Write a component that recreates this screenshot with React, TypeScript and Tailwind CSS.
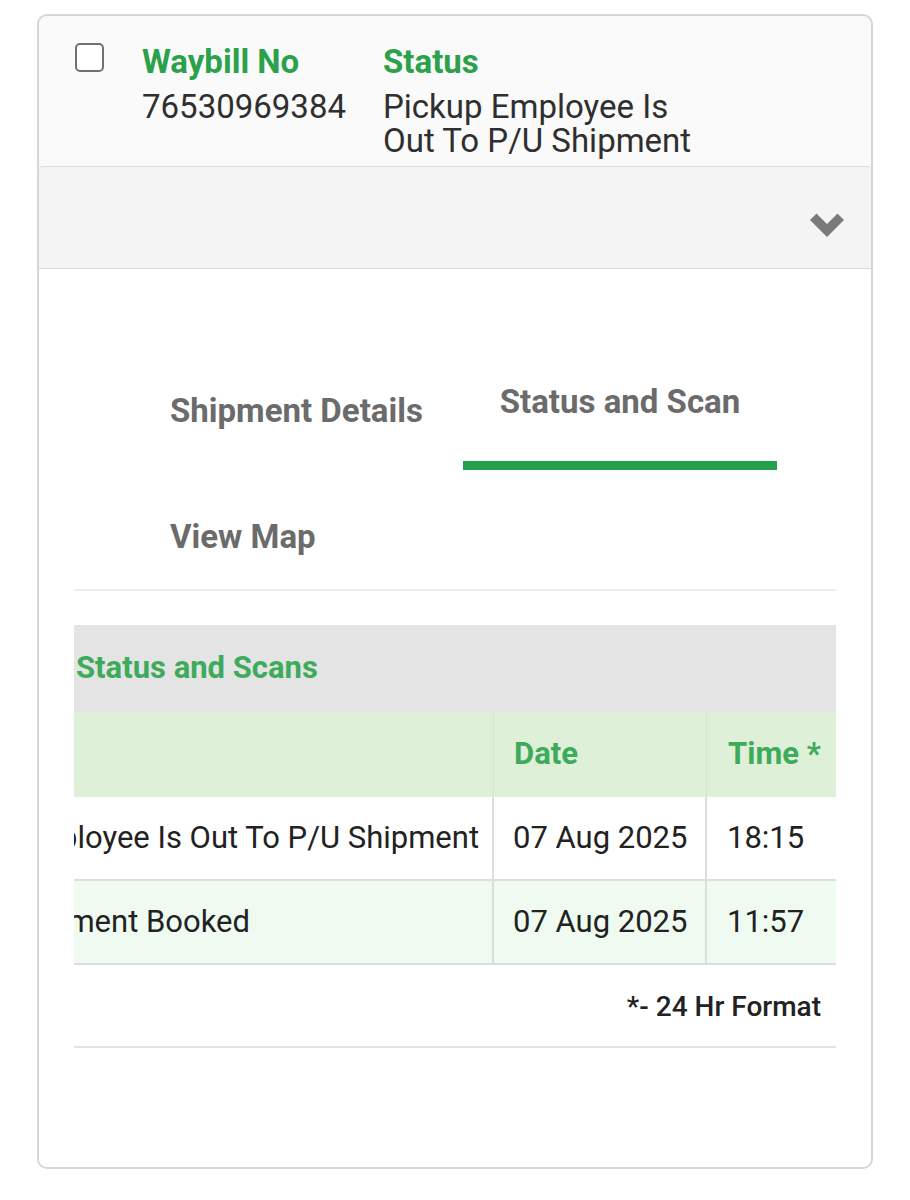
import React from 'react';

const rows = [
  { status: 'Pickup Employee Is Out To P/U Shipment', date: '07 Aug 2025', time: '18:15', indent: 'pl-[20px]', bg: 'bg-white' },
  { status: 'Shipment Booked', date: '07 Aug 2025', time: '11:57', indent: 'pl-[113px]', bg: 'bg-[#effbf1]' },
];

const Chevron = () => (
  <svg width="34" height="24" viewBox="0 0 34 24" aria-hidden="true">
    <polygon points="0,7 6.5,0.5 17,11 27.5,0.5 34,7 17,24" fill="#7a7a7a" />
  </svg>
);

const App: React.FC = () => {
  return (
    <div className="min-h-screen bg-white pt-[14px] px-[37px] font-['Roboto','Liberation_Sans',sans-serif]">
      <div className="border-2 border-[#d6d6d6] rounded-[10px] bg-[#fafafa] overflow-hidden">
        {/* waybill header */}
        <div className="flex pt-[27px] pb-[8px] pl-[36px]">
          <div className="w-[29px] h-[29px] border-2 border-[#707070] rounded-[5px] bg-white shrink-0" />
          <div className="ml-[38px] mt-[2px] w-[241px]">
            <div className="text-[33px] leading-[34px] font-bold text-[#2aa14a] mb-[11px]">Waybill No</div>
            <div className="text-[33px] leading-[34px] text-[#2f2f2f]">76530969384</div>
          </div>
          <div className="mt-[2px]">
            <div className="text-[33px] leading-[34px] font-bold text-[#2aa14a] mb-[11px]">Status</div>
            <div className="text-[33px] leading-[34px] text-[#2f2f2f]">
              Pickup Employee Is
              <br />
              Out To P/U Shipment
            </div>
          </div>
        </div>

        {/* collapse bar */}
        <div className="h-[103px] bg-[#f4f4f4] border-t border-b border-[#dcdcdc] rounded-t-[4px] flex items-center justify-end pr-[27px] pt-[15px]">
          <Chevron />
        </div>

        {/* body */}
        <div className="bg-white px-[35px] pt-[115px] pb-[119px]">
          <div className="flex flex-wrap pl-[59px] text-[33px] leading-[36px] font-bold text-[#6b6b6b]">
            <div className="w-[330px] pl-[37px] mt-[9px]">Shipment Details</div>
            <div className="w-[314px] text-center pb-[41px] border-b-[9px] border-[#22a04b]">Status and Scan</div>
            <div className="w-[330px] pl-[37px] mt-[49px]">View Map</div>
          </div>
          <div className="mt-[34px] border-b-2 border-[#eeeeee]" />

          <div className="mt-[34px]">
            <div className="h-[87px] bg-[#e4e4e4] flex items-center pl-[2px] text-[31px] font-bold text-[#3dab5b]">
              Status and Scans
            </div>
            <div className="overflow-hidden">
              <div className="w-[942px] ml-[-180px] text-[31px]">
                <div className="grid grid-cols-[600px_213px_129px] h-[85px] bg-[#dff0d8] font-bold text-[#3dab5b]">
                  <div className="border-r border-[#d3e6cc]" />
                  <div className="border-r border-[#d3e6cc] flex items-center pl-[20px]">Date</div>
                  <div className="flex items-center pl-[21px]">Time *</div>
                </div>
                {rows.map((r, i) => (
                  <div
                    key={i}
                    className={`grid grid-cols-[600px_213px_129px] h-[84px] border-b-2 border-[#dddddd] text-[#222222] ${r.bg}`}
                  >
                    <div className={`border-r-2 border-[#dddddd] flex items-center whitespace-nowrap ${r.indent}`}>{r.status}</div>
                    <div className="border-r-2 border-[#dddddd] flex items-center pl-[19px] whitespace-nowrap">{r.date}</div>
                    <div className="flex items-center pl-[20px]">{r.time}</div>
                  </div>
                ))}
              </div>
            </div>
            <div className="pt-[25px] pb-[22px] pr-[15px] text-right text-[28px] leading-[34px] font-medium text-[#222222]">
              *- 24 Hr Format
            </div>
            <div className="border-b-2 border-[#e3e3e3]" />
          </div>
        </div>
      </div>
    </div>
  );
};

export default App;
